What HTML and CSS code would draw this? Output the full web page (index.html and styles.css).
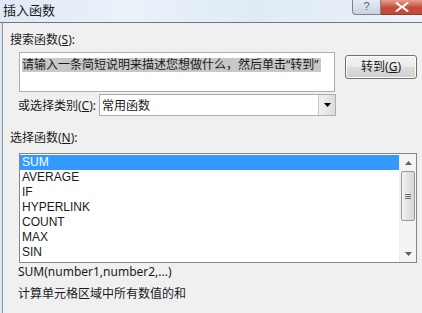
FILE: index.html
```html
<!DOCTYPE html>
<html>
<head>
<meta charset="utf-8">
<link rel="stylesheet" href="styles.css">
</head>
<body>
<div class="window">
  <div class="titlebar">
    <span class="title">插入函数</span>
    <div class="caption-btns">
      <div class="btn-help">?</div>
      <div class="btn-close">
        <svg width="14" height="10" viewBox="0 0 14 10"><path d="M2 0 L7 4 L12 0 L14 1 L9 5 L14 9 L12 10 L7 6 L2 10 L0 9 L5 5 L0 1 Z" fill="#fff"/></svg>
      </div>
    </div>
  </div>
  <div class="frame">
    <div class="frame-strip"></div>
    <div class="dialog">
      <div class="label first">搜索函数(<u>S</u>):</div>
      <div class="search-row">
        <div class="search-box"><span class="sel-text">请输入一条简短说明来描述您想做什么，然后单击“转到”</span></div>
        <div class="goto-btn">转到(<u>G</u>)</div>
      </div>
      <div class="cat-row">
        <span class="cat-label">或选择类别(<u>C</u>):</span>
        <div class="select">
          <span class="select-text">常用函数</span>
          <div class="select-arrow"><svg width="7" height="4" viewBox="0 0 7 4"><path d="M0 0 H7 L3.5 4 Z" fill="#000"/></svg></div>
        </div>
      </div>
      <div class="label second">选择函数(<u>N</u>):</div>
      <div class="listbox">
        <ul class="items">
          <li class="active">SUM</li>
          <li>AVERAGE</li>
          <li>IF</li>
          <li>HYPERLINK</li>
          <li>COUNT</li>
          <li>MAX</li>
          <li>SIN</li>
        </ul>
        <div class="scrollbar">
          <div class="sb-arrow"><svg width="7" height="4" viewBox="0 0 7 4"><path d="M0 4 H7 L3.5 0 Z" fill="#606060"/></svg></div>
          <div class="sb-track">
            <div class="sb-thumb"><span class="grip"></span><span class="grip"></span><span class="grip"></span></div>
          </div>
          <div class="sb-arrow"><svg width="7" height="4" viewBox="0 0 7 4"><path d="M0 0 H7 L3.5 4 Z" fill="#606060"/></svg></div>
        </div>
      </div>
      <div class="syntax">SUM(number1,number2,...)</div>
      <div class="desc">计算单元格区域中所有数值的和</div>
    </div>
  </div>
</div>
</body>
</html>
```
FILE: styles.css
```css
* { box-sizing: border-box; }
html, body { margin: 0; padding: 0; }
body {
  width: 422px;
  height: 313px;
  overflow: hidden;
  font-family: "Noto Sans", "Noto Sans CJK SC", sans-serif;
  font-size: 12px;
  color: #1a1a1a;
  background: #f0f0f0;
}
u { text-decoration: underline; text-underline-offset: 1px; }
.window { display: flex; flex-direction: column; height: 313px; }
.titlebar {
  height: 23px;
  flex: none;
  display: flex;
  justify-content: space-between;
  align-items: flex-start;
  background: linear-gradient(90deg, #dfeaf6 0%, #eaf2fa 30%, #e0ebf6 60%, #ebf2f9 100%);
  border-bottom: 1px solid #6f7a86;
}
.title {
  font-family: "Noto Sans CJK SC", sans-serif;
  font-size: 13px;
  line-height: 20px;
  padding-left: 3px;
  color: #1a1a1a;
}
.caption-btns { display: flex; height: 15px; }
.btn-help {
  width: 29px;
  height: 15px;
  border: 1px solid #7a8592;
  border-top: none;
  border-radius: 0 0 0 4px;
  background: linear-gradient(#e6ecf2, #c8d3de);
  font-family: "Liberation Sans", sans-serif;
  font-size: 11px;
  line-height: 13px;
  text-align: center;
  color: #5a6470;
}
.btn-close {
  width: 41px;
  height: 15px;
  background: linear-gradient(#e3a08e, #c8493a 55%, #c44a36);
  border-bottom: 1px solid #8a3b2e;
  display: flex;
  align-items: center;
  justify-content: center;
}
.frame { flex: 1; display: flex; }
.frame-strip {
  width: 3px;
  background: #dbe6f2;
  border-right: 1px solid #8f9aa6;
}
.dialog {
  flex: 1;
  background: #f0f0f0;
  padding: 0 4px 0 7px;
  display: flex;
  flex-direction: column;
}
.label { line-height: 16px; height: 16px; }
.label.first { margin-top: 9px; }
.search-row { display: flex; margin-top: 4px; height: 40px; }
.search-box {
  width: 316px;
  height: 40px;
  margin-left: 9px;
  background: #fff;
  border: 1px solid #abadb3;
  padding: 3px 0 0 2px;
}
.sel-text {
  background: #c8c8c8;
  line-height: 14px;
  display: inline-block;
  padding-right: 2px;
}
.goto-btn {
  width: 72px;
  height: 24px;
  margin: 3px 0 0 10px;
  border: 1px solid #707070;
  border-radius: 3px;
  background: linear-gradient(#f2f2f2 0%, #ebebeb 50%, #dddddd 51%, #cfcfcf 100%);
  box-shadow: inset 0 0 0 1px #fcfcfc;
  text-align: center;
  line-height: 22px;
}
.cat-row { display: flex; align-items: center; margin-top: 2px; height: 22px; }
.cat-label { margin-left: 8px; width: 81px; }
.select {
  width: 237px;
  height: 22px;
  background: #fff;
  border: 1px solid #abadb3;
  display: flex;
  align-items: center;
  justify-content: space-between;
}
.select-text { padding-left: 2px; }
.select-arrow {
  width: 17px;
  height: 20px;
  border-left: 1px solid #c9c9c9;
  background: linear-gradient(90deg, #f0f0f0, #dcdcdc);
  display: flex;
  align-items: center;
  justify-content: center;
}
.label.second { margin-top: 14px; }
.listbox {
  margin-top: 7px;
  margin-left: 9px;
  width: 398px;
  height: 110px;
  background: #fff;
  border: 1px solid #828790;
  display: flex;
}
.items {
  list-style: none;
  margin: 0;
  padding: 1px 0 0 0;
  flex: 1;
  font-family: "Liberation Sans", sans-serif;
  font-size: 12px;
}
.items li { height: 15px; line-height: 15px; padding-left: 2px; }
.items li.active { background: #3399ff; color: #fff; }
.scrollbar {
  width: 17px;
  display: flex;
  flex-direction: column;
  background: #f3f3f3;
  border-left: 1px solid #ececec;
}
.sb-arrow { height: 17px; display: flex; align-items: center; justify-content: center; }
.sb-track { flex: 1; padding: 0 1px; }
.sb-thumb {
  height: 50px;
  border: 1px solid #9a9a9a;
  border-radius: 2px;
  background: linear-gradient(90deg, #f3f3f3, #e3e3e3 50%, #d6d6d6);
  display: flex;
  flex-direction: column;
  align-items: center;
  justify-content: center;
  gap: 1px;
}
.grip { width: 6px; height: 1px; background: #6a6a6a; }
.syntax { margin-left: 8px; margin-top: 1px; line-height: 16px; height: 16px; }
.desc { margin-left: 8px; margin-top: 6px; line-height: 16px; }
```
